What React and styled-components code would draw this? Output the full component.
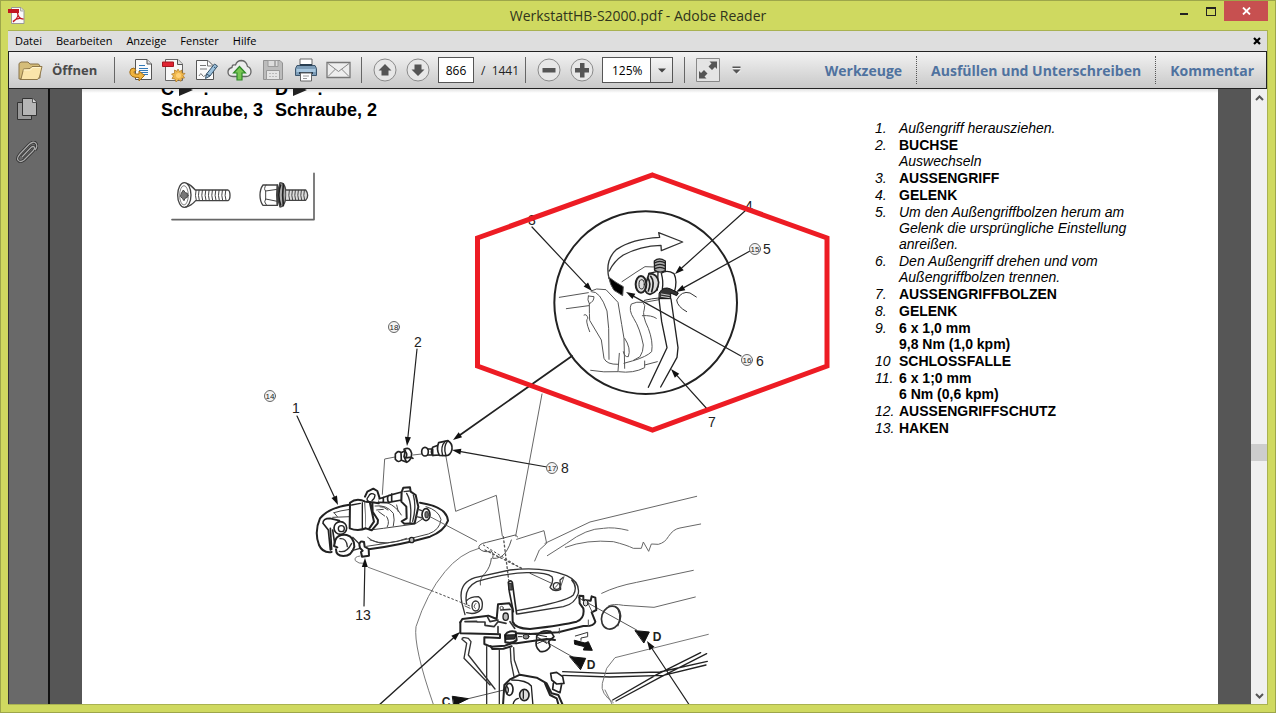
import React from "react";
import styled, { createGlobalStyle } from "styled-components";

const uiFont = `"Segoe UI", "Open Sans", "Noto Sans", sans-serif`;
const pageFont = `"Liberation Sans", Arial, sans-serif`;

const menuItems = ["Datei", "Bearbeiten", "Anzeige", "Fenster", "Hilfe"];
const panels = ["Werkzeuge", "Ausfüllen und Unterschreiben", "Kommentar"];

const parts = [
  { no: "1.", lines: [{ text: "Außengriff herausziehen." }] },
  { no: "2.", lines: [{ text: "BUCHSE", bold: true }, { text: "Auswechseln" }] },
  { no: "3.", lines: [{ text: "AUSSENGRIFF", bold: true }] },
  { no: "4.", lines: [{ text: "GELENK", bold: true }] },
  {
    no: "5.",
    lines: [
      { text: "Um den Außengriffbolzen herum am" },
      { text: "Gelenk die ursprüngliche Einstellung" },
      { text: "anreißen." },
    ],
  },
  { no: "6.", lines: [{ text: "Den Außengriff drehen und vom" }, { text: "Außengriffbolzen trennen." }] },
  { no: "7.", lines: [{ text: "AUSSENGRIFFBOLZEN", bold: true }] },
  { no: "8.", lines: [{ text: "GELENK", bold: true }] },
  { no: "9.", lines: [{ text: "6 x 1,0 mm", bold: true }, { text: "9,8 Nm (1,0 kpm)", bold: true }] },
  { no: "10", lines: [{ text: "SCHLOSSFALLE", bold: true }] },
  { no: "11.", lines: [{ text: "6 x 1;0 mm", bold: true }, { text: "6 Nm (0,6 kpm)", bold: true }] },
  { no: "12.", lines: [{ text: "AUSSENGRIFFSCHUTZ", bold: true }] },
  { no: "13.", lines: [{ text: "HAKEN", bold: true }] },
];

const arrows = [
  [532, 227, 592, 291],
  [745, 211, 675, 274],
  [750, 251, 676, 292],
  [741, 356, 626, 292],
  [708, 410, 671, 369],
  [572, 356, 453, 440, 1.8],
  [417, 349, 407, 446],
  [297, 416, 338, 505],
  [547, 467, 452, 450],
  [364, 606, 365, 558],
  [378, 706, 460, 632, 1.4],
  [690, 706, 647, 641],
];

const labels = [
  ["3", 532, 225],
  ["4", 749, 211],
  ["5", 767, 254],
  ["6", 760, 366],
  ["7", 712, 427],
  ["2", 418, 347],
  ["1", 296, 413],
  ["8", 565, 473],
  ["13", 363, 620],
];

const steps = [
  [15, 755, 249],
  [16, 747, 360],
  [18, 394, 327],
  [14, 270, 396],
  [17, 552, 468],
];

export default function App() {
  return (
    <>
      <GlobalStyle />
      <Window>
        <TitleBar>
          <PdfLogo />
          <Title>WerkstattHB-S2000.pdf - Adobe Reader</Title>
          <WindowControls>
            <WindowButton aria-label="Minimieren">
              <svg width="10" height="10" viewBox="0 0 10 10"><path d="M1 7h8v2H1z" fill="#222" /></svg>
            </WindowButton>
            <WindowButton aria-label="Maximieren">
              <svg width="10" height="9" viewBox="0 0 10 9"><path d="M0 0h10v9H0zM1 2v6h8V2z" fill="#222" fillRule="evenodd" /></svg>
            </WindowButton>
            <WindowButton aria-label="Schließen" $close>
              <svg width="9" height="8" viewBox="0 0 9 8"><path d="M1 0.5 8 7.5M8 0.5 1 7.5" stroke="#fff" strokeWidth="1.8" /></svg>
            </WindowButton>
          </WindowControls>
        </TitleBar>
        <Frame>
          <MenuBar>
            {menuItems.map((item) => (
              <MenuButton key={item}>{item}</MenuButton>
            ))}
            <CloseDocument aria-label="Dokument schließen">
              <svg width="8" height="8" viewBox="0 0 8 8"><path d="M1 1 7 7M7 1 1 7" stroke="#000" strokeWidth="2.2" /></svg>
            </CloseDocument>
          </MenuBar>
          <Toolbar>
            <OpenButton>
              <FolderIcon />
              Öffnen
            </OpenButton>
            <Divider />
            <Tools $wide>
              <ToolButton aria-label="Konvertieren"><ExportIcon /></ToolButton>
              <ToolButton aria-label="PDF erstellen"><CreateIcon /></ToolButton>
              <ToolButton aria-label="Unterschreiben"><SignIcon /></ToolButton>
              <ToolButton aria-label="Hochladen"><CloudIcon /></ToolButton>
              <ToolButton aria-label="Speichern"><SaveIcon /></ToolButton>
              <ToolButton aria-label="Drucken"><PrintIcon /></ToolButton>
              <ToolButton aria-label="E-Mail"><MailIcon /></ToolButton>
            </Tools>
            <Divider />
            <Tools>
              <ToolButton aria-label="Vorherige Seite"><RoundIcon d="M12 6 18.500 12.500H15.500V17.500H8.500V12.500H5.500z" /></ToolButton>
              <ToolButton aria-label="Nächste Seite"><RoundIcon d="M12 18 18.500 11.500H15.500V6.500H8.500V11.500H5.500z" /></ToolButton>
            </Tools>
            <PageInput aria-label="Seite" defaultValue="866" />
            <PageCount>/&nbsp; 1441</PageCount>
            <Divider />
            <Tools>
              <ToolButton aria-label="Verkleinern"><RoundIcon d="M5.500 10h13v4.500h-13z" /></ToolButton>
              <ToolButton aria-label="Vergrößern"><RoundIcon d="M10 5h4.500v5H19v4.500h-4.500v5H10v-5H5V10h5z" /></ToolButton>
            </Tools>
            <ZoomBox>
              <ZoomSelect aria-label="Zoom" defaultValue="125%">
                <option>100%</option>
                <option>125%</option>
                <option>150%</option>
              </ZoomSelect>
              <ZoomArrow>
                <svg width="8" height="5" viewBox="0 0 8 5"><path d="M0 0.500h8L4 4.500z" fill="#444" /></svg>
              </ZoomArrow>
            </ZoomBox>
            <Divider />
            <Tools>
              <ToolButton aria-label="Vollbild"><ExpandIcon /></ToolButton>
              <MoreButton aria-label="Weitere Werkzeuge">
                <svg width="9" height="9" viewBox="0 0 9 9">
                  <path d="M0.500 0.500h8v1.500h-8zM0.500 3.500h8L4.500 7.500z" fill="#555" />
                  <path d="M0.500 2.500h8M5 8.300 8.500 4.800" stroke="#fff" strokeWidth="0.700" />
                </svg>
              </MoreButton>
            </Tools>
            <Panels>
              {panels.map((panel) => (
                <PanelButton key={panel}>{panel}</PanelButton>
              ))}
            </Panels>
          </Toolbar>
          <Body>
            <Sidebar>
              <SideButton aria-label="Seitenminiaturen"><PagesIcon /></SideButton>
              <SideButton aria-label="Anlagen"><ClipIcon /></SideButton>
            </Sidebar>
            <Viewport>
              <Page>
                <FigureColumn>
                  <ScrewLegend>
                    <ScrewType letter="C" name="Schraube, 3" />
                    <ScrewType letter="D" name="Schraube, 2" />
                  </ScrewLegend>
                  <Drawing />
                </FigureColumn>
                <PartList>
                  {parts.map((part) => (
                    <Part key={part.no}>
                      <span>{part.no}</span>
                      <div>
                        {part.lines.map((line) => (
                          <PartLine key={line.text} $bold={line.bold}>{line.text}</PartLine>
                        ))}
                      </div>
                    </Part>
                  ))}
                </PartList>
              </Page>
            </Viewport>
            <ScrollBar>
              <ScrollButton aria-label="Nach oben">
                <svg width="9" height="6" viewBox="0 0 9 6"><path d="M1 5 4.500 1.500 8 5" fill="none" stroke="#555" strokeWidth="2" /></svg>
              </ScrollButton>
              <Track>
                <Thumb />
              </Track>
              <ScrollButton aria-label="Nach unten">
                <svg width="9" height="6" viewBox="0 0 9 6"><path d="M1 1 4.500 4.500 8 1" fill="none" stroke="#555" strokeWidth="2" /></svg>
              </ScrollButton>
            </ScrollBar>
          </Body>
        </Frame>
      </Window>
    </>
  );
}

function ScrewType({ letter, name }) {
  return (
    <div>
      <ScrewMark>
        {letter}
        <svg width="14" height="12" viewBox="0 0 14 12"><path d="M0 0 14 6 0 12z" fill="#222" /></svg>
        <span>:</span>
      </ScrewMark>
      {name}
    </div>
  );
}

function Arrow({ from, to, width = 1.2 }) {
  const [x, y] = to;
  const length = Math.hypot(x - from[0], y - from[1]);
  const dx = (x - from[0]) / length;
  const dy = (y - from[1]) / length;
  const bx = x - dx * 9;
  const by = y - dy * 9;
  return (
    <g>
      <path d={`M${from[0]} ${from[1]}L${bx} ${by}`} stroke="#222" strokeWidth={width} />
      <path d={`M${x} ${y}L${bx - dy * 3} ${by + dx * 3}L${bx + dy * 3} ${by - dx * 3}z`} fill="#111" />
    </g>
  );
}

function Drawing() {
  return (
    <svg width="700" height="560" viewBox="161 165 700 560" fill="none" strokeLinecap="round" strokeLinejoin="round">
      <Screws />
      <Detail />
      <Handle />
      <DoorPanel />
      {arrows.map(([x1, y1, x2, y2, width]) => (
        <Arrow key={`${x1}-${y1}`} from={[x1, y1]} to={[x2, y2]} width={width} />
      ))}
      {labels.map(([text, x, y]) => (
        <DrawingText key={text} x={x} y={y}>{text}</DrawingText>
      ))}
      {steps.map(([no, x, y]) => (
        <g key={no}>
          <circle cx={x} cy={y} r="5.500" stroke="#666" strokeWidth="1" fill="#f4f4f4" />
          <DrawingText x={x} y={y + 3} $step>{no}</DrawingText>
        </g>
      ))}
      <DrawingText x="657" y="641" $bold>D</DrawingText>
      <DrawingText x="591" y="669" $bold>D</DrawingText>
      <DrawingText x="446" y="706" $bold>C</DrawingText>
      <path d="M652.500 175 827 238V366L652.500 430 477.500 366V238z" stroke="#ed1c24" strokeWidth="5" strokeLinejoin="miter" />
    </svg>
  );
}

function Screws() {
  return (
    <g transform="translate(0 85) scale(0.333333)" stroke="#444" strokeWidth="4">
      <path d="M942 265V404H516" stroke="#666" strokeWidth="5" />
      <ellipse cx="553" cy="330" rx="20" ry="37" />
      <ellipse cx="552" cy="331" rx="13" ry="29" strokeWidth="2" />
      <path d="M545 323 550 315 556 323 562 325 562 337 555 340 552 347 547 340 542 335z" fill="#777" strokeWidth="3" />
      <path d="M560 295Q574 300 586 315H684Q690 318 690 331Q690 345 684 347H587Q573 363 558 366" />
      <path d="M588 316Q584 331 589 347M597 316Q593 331 598 347M607 316Q603 331 608 347M617 316Q613 331 618 347M627 316Q623 331 628 347M637 316Q633 331 638 347M647 316Q643 331 648 347M657 316Q653 331 658 347M667 316Q663 331 668 347M677 316Q673 331 678 347" strokeWidth="3" />
      <path d="M789 300H832V361H789Q780 350 780 331Q780 312 789 300z" />
      <path d="M798 300Q790 312 797 318V342Q790 350 799 360M797 318 832 313M797 342 832 349" strokeWidth="3" />
      <path d="M832 300Q828 330 832 361M840 293Q826 330 840 366Q856 366 858 330Q858 293 840 293" fill="#aaa" />
      <path d="M842 300Q831 330 842 360M850 297Q846 330 850 362" stroke="#222" strokeWidth="5" />
      <path d="M859 315H917Q923 322 923 331Q923 341 917 346H859" fill="#ddd" />
      <path d="M868 316Q864 331 869 346M877 316Q873 331 878 346M886 316Q882 331 887 346M895 316Q891 331 896 346M904 316Q900 331 905 346M913 316Q909 331 914 346" strokeWidth="3" />
    </g>
  );
}

// Enlarged view of the joint inside the circle
function Detail() {
  return (
    <g transform="translate(460 165) scale(0.333333)" stroke="#555" strokeWidth="3">
      <circle cx="557" cy="413" r="274" stroke="#222" strokeWidth="6" />
      <path d="M447 340Q434 285 470 253Q515 222 599 217L596 203 668 231 604 257 603 241Q540 243 490 270Q462 288 448 318" stroke="#333" strokeWidth="4" />
      <path d="M446 336 468 352 490 365 488 392 462 376Q450 360 446 336z" fill="#000" />
      <path d="M486 350 528 322 555 305 583 306M298 397 385 383M319 431 386 422" />
      <path d="M393 378 410 372 438 374 474 412 485 478 492 520 494 610M395 380Q420 377 441 438L446 490 447 583" />
      <path d="M385 393 402 395Q402 410 388 416M385 393Q381 405 388 416Q388 450 389 466L424 525 432 580Q440 599 474 598M372 450Q380 445 384 460 374 462 389 500" />
      <path d="M494 520Q514 550 505 575Q493 577 490 560M492 595Q520 590 540 575 550 560 550 540 540 490 521 460 505 435 514 417 530 409 548 412 558 420 553 432 545 450 565 490 580 530 575 560 560 575 520 587" />
      <path d="M392 616Q430 623 475 620 520 626 554 608V588M474 618 478 565M554 600 592 590M553 412 598 404M547 452Q575 450 589 460" />
      <path d="M680 440Q652 425 650 405 665 376 690 384L709 396M553 406Q600 395 630 400" stroke="#333" />
      <path d="M597 402 605 470 621 548 565 667M633 402 654 548 651 577 602 666" stroke="#222" strokeWidth="4" />
      <path d="M583 288Q597 275 616 288V317Q600 326 584 316z" fill="#aaa" stroke="#222" strokeWidth="4" />
      <path d="M583 294Q600 284 616 294M583 303Q600 293 616 303M583 312Q600 302 616 312M594 322 592 375" stroke="#222" strokeWidth="4" />
      <path d="M604 325Q620 313 642 326 653 348 643 382M567 325 590 320M604 325Q611 350 607 372" stroke="#222" strokeWidth="4" />
      <path d="M567 326Q592 325 596 352 595 382 570 388Q548 384 558 354z" fill="#ddd" stroke="#222" strokeWidth="5" />
      <path d="M572 334Q585 350 575 380M563 338Q575 355 565 378" stroke="#222" strokeWidth="5" />
      <ellipse cx="543" cy="358" rx="16" ry="25" fill="#ddd" stroke="#222" strokeWidth="6" />
      <ellipse cx="545" cy="358" rx="8" ry="14" stroke="#222" />
      <path d="M598 383Q610 362 632 372L655 384 650 392 632 384V401H598z" fill="#333" stroke="#111" />
      <path d="M604 394 628 398M604 387 628 391" stroke="#ccc" />
    </g>
  );
}

// Outer handle with the bushing and joint next to it
function Handle() {
  return (
    <g transform="translate(250 310) scale(0.333333)" stroke="#444" strokeWidth="4">
      <path d="M298 584Q238 592 210 625 192 665 207 705 218 730 245 726M356 718Q450 705 540 680 583 663 594 632 590 590 510 578" stroke="#222" strokeWidth="6" />
      <path d="M350 709Q450 695 535 672 570 660 573 628 565 600 528 590M360 660 400 655 495 642 520 625M353 682Q375 700 403 700M360 690Q410 710 470 685M252 608Q270 602 300 598M248 622 300 620M252 608 262 620" strokeWidth="3" />
      <path d="M219 640Q218 625 240 625L268 632M219 640 235 660 241 720M241 655 245 718M248 660 254 700" stroke="#222" strokeWidth="5" />
      <circle cx="271" cy="654" r="19" fill="#fff" stroke="#222" strokeWidth="5" />
      <circle cx="274" cy="656" r="9" stroke="#222" />
      <path d="M256 690Q264 672 290 675 312 680 313 710 305 738 280 738 258 738 258 718M256 690 252 708 262 712" fill="#fff" stroke="#222" strokeWidth="6" />
      <path d="M270 686Q290 684 292 710M268 724Q290 730 305 700M308 682 326 700M306 722 330 715" stroke="#333" />
      <path d="M300 578Q320 562 346 575L350 654Q325 665 299 655z" fill="#fff" stroke="#222" strokeWidth="6" />
      <path d="M337 578V655M305 585 331 580" stroke="#222" />
      <path d="M345 560 352 545 370 536 382 543 390 568 386 580 367 577 368 605 384 630 383 640 365 661 348 655M348 575 367 577M360 580 372 635 358 655" fill="#fff" stroke="#222" strokeWidth="6" />
      <path d="M355 560Q362 545 375 555 374 567 366 572M355 560Q345 570 360 576" stroke="#222" />
      <path d="M388 566 415 557 455 546V570L412 578 385 577M415 557Q410 566 416 578M425 552V574M400 562V577" fill="#fff" stroke="#222" strokeWidth="5" />
      <path d="M375 588Q410 583 430 610 435 630 430 648M390 590Q400 588 414 600M412 578Q440 590 454 615M410 620Q420 635 412 650M380 600 400 598M440 585 445 605M386 605 404 618" strokeWidth="3" />
      <path d="M455 546 460 533 480 532 482 545 497 555 505 590 494 640 463 641 455 634 470 625 469 590 454 575z" fill="#fff" stroke="#222" strokeWidth="6" />
      <path d="M470 550Q488 580 480 638M490 555Q500 590 488 634M462 545 478 543" stroke="#333" />
      <ellipse cx="528" cy="614" rx="12" ry="18" stroke="#222" strokeWidth="5" />
      <ellipse cx="530" cy="614" rx="5" ry="9" fill="#777" />
      <path d="M505 598 515 602 M500 620 517 624" />
      <ellipse cx="485" cy="690" rx="7" ry="8" fill="#bbb" stroke="#222" />
      <path d="M328 704Q330 690 342 696L344 710 356 717 357 737 336 740 333 726 338 722 330 714z" fill="#fff" stroke="#222" strokeWidth="6" />
      <path d="M330 738Q311 740 316 752 326 762 340 760M355 772 545 842" stroke="#777" strokeWidth="3" />
      <path d="M545 842 660 888M700 705 805 770" strokeWidth="3" strokeDasharray="5 8" />
      <path d="M397 553 404 447 435 441M489 435 515 432M588 440 617 604 739 556 757 678M876 252 797 678M540 620 680 694" stroke="#666" strokeWidth="3" />
      <path d="M436 432Q444 420 453 428L454 450Q445 460 436 448zM453 428 466 422 462 440 470 457 453 450M462 418Q480 408 485 430 485 450 472 456" fill="#fff" stroke="#222" strokeWidth="5" />
      <path d="M463 422Q475 430 467 444 482 440 489 445" stroke="#222" strokeWidth="5" />
      <ellipse cx="525" cy="425" rx="10" ry="13" fill="#fff" stroke="#222" strokeWidth="5" />
      <path d="M533 417 548 417V435H533M548 412 568 404M548 436 570 435M548 412Q540 425 549 437" stroke="#222" strokeWidth="5" />
      <path d="M566 398 594 392Q608 400 606 418 602 436 588 437L568 436Q558 418 566 398z" fill="#fff" stroke="#222" strokeWidth="5" />
      <path d="M594 392Q578 410 588 437M586 394Q570 410 578 437" stroke="#222" />
    </g>
  );
}

function DoorPanel() {
  return (
    <g transform="translate(370 480) scale(0.333333)" stroke="#555" strokeWidth="3">
      <path d="M190 673Q130 500 138 440 170 340 225 275 270 220 327 205" stroke="#777" />
      <path d="M440 178 522 152 530 190 508 210 494 243M525 190 660 126 980 49M532 227 590 190Q650 145 700 145 730 140 774 151M586 202Q650 178 730 185 770 195 790 205L814 205 820 186 836 214 844 192 865 193Q885 188 895 170 910 147 930 144L992 132M695 340Q740 318 800 307L970 271M715 378Q730 370 760 376L852 382 976 351" stroke="#666" />
      <path d="M327 205Q322 192 350 187L436 165 443 171M327 205Q340 220 362 213 372 217 368 235 378 237 394 230 414 215 424 180M364 235Q362 260 345 280 328 295 331 315" stroke="#555" />
      <path d="M400 170 416 300M345 210 455 265" strokeWidth="4" strokeDasharray="5 8" />
      <path d="M480 280 545 310M625 353 800 450M500 470 610 532M295 656 410 628" strokeWidth="3" />
      <path d="M276 370Q262 310 315 293L420 270Q520 258 590 287 630 305 625 340 615 372 580 380L443 402M290 372Q280 325 320 305 400 280 470 278 530 277 546 290 552 305 540 322 552 338 572 328L570 300 580 292M605 300Q624 320 610 345 590 365 440 392M276 370 285 404M290 362Q300 350 325 350 342 360 335 387 318 406 290 398" stroke="#333" strokeWidth="4" />
      <ellipse cx="317" cy="378" rx="11" ry="15" stroke="#333" strokeWidth="4" />
      <path d="M318 370Q307 380 316 385" />
      <circle cx="560" cy="318" r="10" stroke="#333" strokeWidth="4" />
      <path d="M556 322 564 313M582 290 572 320M300 385 285 378" />
      <path d="M415 307Q422 298 427 307L432 345 440 402M415 307 418 335 430 395" stroke="#222" strokeWidth="5" />
      <path d="M417 310 425 310 427 330 418 330z" fill="#555" stroke="#222" />
      {/* lock bracket */}
      <path d="M271 427 277 417 355 407 380 417 384 373 418 370 427 385 428 425Q435 446 480 447 580 435 620 425 645 415 640 385L629 370 628 347 640 348 640 360 662 362 665 349 676 353 679 390 665 397 676 425Q672 440 640 438L565 457 480 462 440 460" stroke="#222" strokeWidth="6" />
      <path d="M271 427V460L390 463V474L343 472V492L362 500 405 497 425 490 440 490 530 477 555 480" stroke="#222" strokeWidth="6" />
      <path d="M322 426 345 426V436L372 440 384 425 408 430M352 410 360 425 384 420M285 425 320 424M384 440V460M420 425 434 445M392 390 420 388" stroke="#333" strokeWidth="5" />
      <ellipse cx="407" cy="410" rx="8" ry="11" fill="#bbb" stroke="#222" strokeWidth="4" />
      <circle cx="395" cy="384" r="5" />
      <ellipse cx="647" cy="369" rx="7" ry="9" fill="#ddd" stroke="#222" />
      <path d="M655 372 667 397M655 420V440M568 445V460" />
      <path d="M405 465Q415 450 437 455L440 480Q430 492 406 487z" fill="#fff" stroke="#222" strokeWidth="6" />
      <path d="M407 465 437 464 434 477 408 478z" fill="#333" stroke="#111" />
      <path d="M362 498 367 507 400 506 425 499" stroke="#222" strokeWidth="6" />
      <ellipse cx="468" cy="470" rx="9" ry="7" fill="#888" stroke="#222" />
      <path d="M478 460 530 470M445 470H455" stroke="#222" />
      <path d="M500 468Q515 448 542 454L552 470 536 484 540 500Q530 518 510 514 493 500 500 480z" stroke="#222" strokeWidth="5" />
      <path d="M503 490Q520 480 550 474M506 475 530 490" stroke="#222" />
      <ellipse cx="723" cy="413" rx="28" ry="35" stroke="#333" strokeWidth="5" transform="rotate(18 723 413)" />
      <path d="M736 378Q758 400 744 438" stroke="#333" />
      <path d="M616 468 653 457V470L633 474V481" stroke="#333" />
      <path d="M614 481 645 489 655 485 667 511 640 510 644 500 615 493z" fill="#111" stroke="#111" />
      {/* rods and latch */}
      <path d="M276 478Q275 470 295 475L303 485 295 525 375 627M276 478 290 490 282 535 360 615" stroke="#333" strokeWidth="4" />
      <path d="M350 500V690M388 507V690M421 505 423 545 432 590M431 503 433 540 447 580" stroke="#333" strokeWidth="4" />
      <path d="M398 690 403 615 420 598 450 584 500 593 530 610 545 640 565 645 585 690M525 610 540 645 560 655 570 690" stroke="#222" strokeWidth="6" />
      <ellipse cx="418" cy="628" rx="11" ry="18" fill="#fff" stroke="#222" strokeWidth="5" />
      <ellipse cx="463" cy="645" rx="14" ry="17" fill="#ddd" stroke="#222" strokeWidth="5" />
      <path d="M409 617Q420 628 411 642M425 600Q470 600 484 618L490 690M430 690Q425 660 445 655M460 632V655" stroke="#222" strokeWidth="4" />
      <path d="M542 580 560 577 578 590 582 610 560 612 545 600zM550 610 548 628 570 638 575 612" fill="#fff" stroke="#222" strokeWidth="5" />
      <path d="M578 575 710 580 870 576 1012 544M578 586 720 591 880 586 1008 555M728 660 860 584 992 518M738 663 870 592 1010 521" stroke="#222" strokeWidth="4" />
      <path d="M730 668Q690 640 697 610L710 565 735 533 1015 463M705 630 730 680" stroke="#777" />
      <path d="M796 452 838 456 822 488zM600 530 647 535 632 568zM248 649 295 656 252 677z" fill="#111" stroke="#111" />
    </g>
  );
}

function PdfLogo() {
  return (
    <svg width="17" height="17" viewBox="0 0 17 17">
      <path d="M3.500 0.500H13L16 3.500V16.500H3.500z" fill="#fafafa" stroke="#999" />
      <path d="M0 2h11v4H0z" fill="#c11720" />
      <path d="M12.500 1v3h3" fill="#ddd" stroke="#aaa" />
      <path d="M9.500 5C11 9 8 13 5 15M9.500 6C10 10 12 12 15.500 12M5 14.500C8 11.500 12 11 15 12" fill="none" stroke="#c11720" strokeWidth="1.300" />
    </svg>
  );
}

function FolderIcon() {
  return (
    <svg width="25" height="21" viewBox="0 0 25 21">
      <path d="M1 19V3.500L3 2h7l2 2h8.500l1.500 2v12z" fill="#d5bd79" stroke="#88734a" />
      <path d="M3 19 5.500 9 12 8.500 14 6.500H24L21.500 17 19.500 19.500H2z" fill="#fae5aa" stroke="#8f7849" />
      <path d="M5.500 10H12.500L14.500 7.500H22.500" stroke="#fff5cf" fill="none" />
    </svg>
  );
}

function ExportIcon() {
  return (
    <svg width="24" height="24" viewBox="0 0 24 24">
      <path d="M6.500 1.500H18L22.500 6V21.500H6.500z" fill="#fafafa" stroke="#555" />
      <path d="M18 1.500V6h4.500" fill="#ddd" stroke="#555" />
      <path d="M10 7.500h6M10 10.500h9M10 12.500h9M11 14.500h8M12 16.500h7" stroke="#337ab8" strokeWidth="1.200" />
      <path d="M5 10Q1 10 0.800 14 1 20 10 19.500V23L15.500 17.500 10 13V16Q5 16.500 5 14 5 13 7 12.500z" fill="#f0b33e" stroke="#a46e15" />
    </svg>
  );
}

function CreateIcon() {
  return (
    <svg width="24" height="24" viewBox="0 0 24 24">
      <path d="M3.500 1.500H16L20.500 6V22.500H3.500z" fill="#f7f7f7" stroke="#666" />
      <path d="M15.500 1.500V6.500h5" fill="#ddd" stroke="#555" />
      <path d="M0.500 4h11v4.500H0.500z" fill="#df2432" stroke="#a61720" />
      <path d="m16 11 1.500 2.500 2.500-1.500v3l3 .500-2 2 1.500 2.500-3 .300-.500 3-2.500-1.500L14 24l-1-3-3-.500 1.500-2.500L9.500 16l3-.700V12l2.500 1.300z" fill="#efb74c" stroke="#aa7422" strokeWidth="0.700" />
      <circle cx="16.500" cy="17.500" r="2.500" fill="#ffd176" />
    </svg>
  );
}

function SignIcon() {
  return (
    <svg width="24" height="24" viewBox="0 0 24 24">
      <path d="M1.500 2.500H13L18.500 8V21.500H1.500z" fill="#fafafa" stroke="#555" />
      <path d="M12.500 2.500V8h5M5 7.500h6M5 11h7M4 18q2-4 3-1t4 0" fill="none" stroke="#777" />
      <path d="M19.500 6 22.500 8 15 18 10.500 20.500 11.500 16z" fill="#9dc2dd" stroke="#345068" />
      <path d="m11.500 16 3.500 2M19 9l1.500 1" stroke="#345068" />
    </svg>
  );
}

function CloudIcon() {
  return (
    <svg width="25" height="24" viewBox="0 0 25 24">
      <path d="M6 18.500Q1 18.500 1 14 1 10.500 5 9.500 5 6 8.500 7 10 2.500 14.500 2.500 19.500 3 20.500 8.500 24 9.500 24 14 23.500 18.500 19 18.500z" fill="#ededed" stroke="#666" strokeWidth="1.300" />
      <path d="m12.500 8.500 6 6.500h-3.500v7h-5v-7H6.500z" fill="#77c552" stroke="#2f8928" strokeWidth="1.200" />
    </svg>
  );
}

function SaveIcon() {
  return (
    <svg width="24" height="24" viewBox="0 0 24 24">
      <path d="M2.500 2.500H19L21.500 5V21.500H2.500z" fill="#bcbcbc" stroke="#929292" />
      <path d="M7 2.500h10v6H7z" fill="#ddd" stroke="#9b9b9b" />
      <path d="M13 3h2v5h-2z" fill="#aaa" />
      <path d="M5.500 12.500h13v9h-13z" fill="#e5e5e5" stroke="#999" />
      <path d="M8 15.500h8M8 18.500h8" stroke="#bbb" strokeDasharray="2 1" />
    </svg>
  );
}

function PrintIcon() {
  return (
    <svg width="24" height="24" viewBox="0 0 24 24">
      <path d="M6 1h12v8H6z" fill="#fff" stroke="#666" />
      <path d="M3 7.500h18l1.500 3v7h-21v-7z" fill="#7d9db8" stroke="#3c556c" />
      <path d="M2.500 11h19v3h-19z" fill="#a8c7df" />
      <path d="M5 14h14v2H5z" fill="#293e51" />
      <path d="M6.500 15h11v8h-11z" fill="#fff" stroke="#666" />
      <path d="M9 18h6M9 20.500h4" stroke="#999" />
      <path d="M6 7h12" stroke="#293e51" strokeWidth="2" />
    </svg>
  );
}

function MailIcon() {
  return (
    <svg width="25" height="24" viewBox="0 0 25 24">
      <path d="M1 4.500h23v15H1z" fill="#eee" stroke="#777" strokeWidth="1.300" />
      <path d="m2 5.500 10.500 8L23 5.500M2 18.500l7.500-7.500M23 18.500 15.500 11" fill="none" stroke="#888" />
    </svg>
  );
}

function RoundIcon({ d }) {
  return (
    <svg width="24" height="24" viewBox="0 0 24 24">
      <circle cx="12" cy="12" r="11" fill="#e7e7e7" stroke="#8a8a8a" />
      <path d={d} fill="#555" />
    </svg>
  );
}

function ExpandIcon() {
  return (
    <svg width="24" height="24" viewBox="0 0 24 24">
      <path d="M0.500 0.500h23v23H0.500z" fill="#e4e4e4" stroke="#888" />
      <path d="M13.500 3.500H21v7.500l-2-2-3 3-3.500-3.500 3-3zM3 13l2 2 3-3 3.500 3.500-3 3 2 2H3z" fill="#555" />
    </svg>
  );
}

function PagesIcon() {
  return (
    <svg width="22" height="24" viewBox="0 0 22 24">
      <path d="M1.500 5.500h14v17h-14z" fill="#999" stroke="#333" />
      <path d="M6.500 1.500H17L20.500 5V18.500h-14z" fill="#b5b5b5" stroke="#333" />
      <path d="M16.500 1.500v4h4" fill="#ddd" stroke="#555" />
    </svg>
  );
}

function ClipIcon() {
  const clip = "M6 16 15 6.500Q17.500 4.500 18.500 6.500 19 8 17 10L8 19Q4 22 2 19 0.500 17 4 13L13 3.500Q17.500-0.500 20 2.500 22 5.500 19 9";
  return (
    <svg width="22" height="24" viewBox="0 0 22 24" fill="none">
      <path d={clip} stroke="#333" strokeWidth="3" />
      <path d={clip} stroke="#aaa" strokeWidth="1.300" />
    </svg>
  );
}

const GlobalStyle = createGlobalStyle`
  * {
    box-sizing: border-box;
  }
  body {
    margin: 0;
    font-family: ${uiFont};
  }
  button, input, select {
    font-family: inherit;
    padding: 0;
    border: 0;
    background: transparent;
  }
  svg {
    display: block;
    flex-shrink: 0;
  }
`;

const Window = styled.div`
  display: flex;
  flex-direction: column;
  height: 100vh;
  padding: 0 7px 7px;
  border: 1px solid #9da64a;
  background-color: #cfd960;
`;

const TitleBar = styled.header`
  display: grid;
  grid-template-columns: 1fr auto 1fr;
  height: 29px;
  align-items: center;
`;

const Title = styled.h1`
  margin: 0;
  font-size: 14px;
  font-weight: 400;
  color: #30341c;
`;

const WindowControls = styled.div`
  display: flex;
  align-self: start;
  justify-content: flex-end;
`;

const WindowButton = styled.button`
  display: flex;
  align-items: center;
  justify-content: center;
  width: ${(props) => (props.$close ? "44px" : "27px")};
  height: 20px;
  background-color: ${(props) => (props.$close ? "#c75050" : "transparent")};
`;

const Frame = styled.div`
  display: flex;
  flex: 1;
  flex-direction: column;
  min-height: 0;
  border: 1px solid #a9b251;
  border-left: 0;
`;

const MenuBar = styled.nav`
  display: flex;
  align-items: center;
  gap: 14px;
  height: 20px;
  padding: 0 6px 0 7px;
  background-color: #dedede;
`;

const MenuButton = styled.button`
  font-size: 11px;
  line-height: 20px;
  color: #000;
`;

const CloseDocument = styled.button`
  margin-left: auto;
`;

const Toolbar = styled.div`
  display: flex;
  align-items: center;
  height: 38px;
  border: 1px solid #222;
  background: linear-gradient(#f2f2f2, #c9c9c9);
`;

const OpenButton = styled.button`
  display: flex;
  align-items: center;
  gap: 9px;
  width: 105px;
  padding-left: 9px;
  font-size: 13px;
  font-weight: 700;
  color: #4a4a4a;
`;

const Divider = styled.div`
  width: 1px;
  height: 26px;
  background-color: #666;
`;

const Tools = styled.div`
  display: flex;
  align-items: center;
  margin: ${(props) => (props.$wide ? "0 6px 0 9px" : "0 4px 0 6px")};
`;

const ToolButton = styled.button`
  display: flex;
  align-items: center;
  justify-content: center;
  width: 33px;
  height: 32px;
`;

const PageInput = styled.input`
  width: 36px;
  height: 26px;
  border: 1px solid #555;
  background-color: #fff;
  font-size: 12px;
  text-align: center;
`;

const PageCount = styled.span`
  width: 51px;
  padding-left: 7px;
  font-size: 12px;
  color: #222;
`;

const ZoomBox = styled.div`
  display: flex;
  position: relative;
  margin-right: 11px;
`;

const ZoomSelect = styled.select`
  appearance: none;
  width: 71px;
  height: 26px;
  padding-left: 9px;
  border: 1px solid #555;
  border-radius: 0;
  background-color: #fff;
  font-size: 12px;
  color: #000;
`;

const ZoomArrow = styled.span`
  position: absolute;
  top: 0;
  right: 0;
  display: flex;
  align-items: center;
  justify-content: center;
  width: 23px;
  height: 26px;
  border: 1px solid #555;
  background: linear-gradient(#f5f5f5, #d8d8d8);
  pointer-events: none;
`;

const MoreButton = styled.button`
  margin-left: 8px;
`;

const Panels = styled.div`
  display: flex;
  margin-left: auto;
`;

const PanelButton = styled.button`
  height: 28px;
  padding: 0 14px;
  font-size: 14px;
  font-weight: 700;
  color: #4f729f;
  & + & {
    border-left: 1px dotted #555;
  }
  &:last-child {
    padding-right: 12px;
  }
`;

const Body = styled.div`
  display: flex;
  flex: 1;
  min-height: 0;
`;

const Sidebar = styled.aside`
  display: flex;
  flex-direction: column;
  align-items: center;
  gap: 20px;
  width: 42px;
  padding-top: 8px;
  padding-right: 4px;
  border-left: 1px solid #333;
  border-right: 2px solid #111;
  background-color: #696969;
`;

const SideButton = styled.button`
  display: block;
`;

const Viewport = styled.main`
  flex: 1;
  min-width: 0;
  overflow: hidden;
  padding: 0 33px 0 32px;
  background-color: #565656;
`;

const Page = styled.article`
  display: flex;
  gap: 14px;
  min-height: 100%;
  padding-left: 79px;
  background: linear-gradient(#e2e2e2, #fff 4px);
  font-family: ${pageFont};
`;

const FigureColumn = styled.div`
  flex: none;
`;

// The first row is partly scrolled out of view
const ScrewLegend = styled.div`
  display: grid;
  grid-template-columns: 114px 114px;
  height: 86px;
  margin-top: -10px;
  align-content: start;
  font-size: 18px;
  font-weight: 700;
  line-height: 21px;
  white-space: nowrap;
`;

const ScrewMark = styled.div`
  display: flex;
  align-items: center;
  gap: 5px;
  span {
    margin-left: 5px;
  }
`;

const PartList = styled.div`
  display: flex;
  flex-direction: column;
  gap: 1px;
  margin-top: 31px;
`;

const Part = styled.div`
  display: grid;
  grid-template-columns: 24px auto;
  font-size: 14px;
  font-style: italic;
  line-height: 16px;
  white-space: nowrap;
`;

const PartLine = styled.div`
  font-weight: ${(props) => (props.$bold ? 700 : 400)};
  font-style: ${(props) => (props.$bold ? "normal" : "italic")};
`;

const DrawingText = styled.text`
  fill: #222;
  font-size: ${(props) => (props.$step ? "8px" : props.$bold ? "12px" : "14px")};
  font-weight: ${(props) => (props.$bold ? 700 : 400)};
  text-anchor: middle;
`;

const ScrollBar = styled.div`
  display: flex;
  flex-direction: column;
  width: 16px;
  background-color: #f0f0f0;
`;

const ScrollButton = styled.button`
  display: flex;
  align-items: center;
  justify-content: center;
  height: 17px;
`;

const Track = styled.div`
  display: flex;
  flex: 1;
  flex-direction: column;
  &::before {
    content: "";
    flex: 3;
  }
  &::after {
    content: "";
    flex: 2;
  }
`;

const Thumb = styled.div`
  height: 17px;
  background-color: #cdcdcd;
`;
